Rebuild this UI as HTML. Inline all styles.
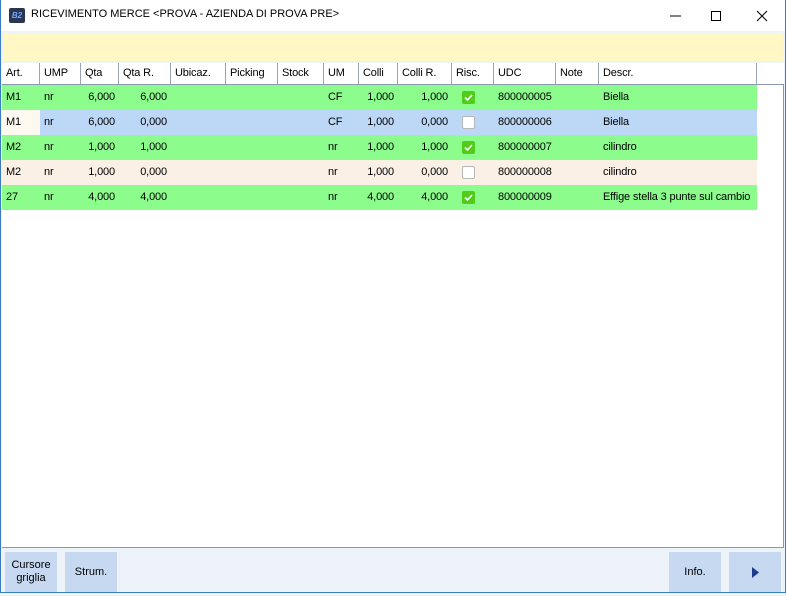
<!DOCTYPE html>
<html><head><meta charset="utf-8"><style>
*{margin:0;padding:0;box-sizing:border-box}
body{width:786px;height:593px;overflow:hidden;background:#eef2f9;font-family:Tahoma,"Liberation Sans",sans-serif;font-size:11px;color:#000;position:relative}
.win{position:absolute;left:0;top:0;width:786px;height:593px;border:1px solid #3a7cc2;border-top:none}
.title{position:absolute;left:0;top:0;width:785px;height:31px;background:#fff}
.logo{position:absolute;left:9px;top:8px;width:16px;height:15px;background:#2a3550;border-radius:2px;color:#6fa8ff;font-size:8px;font-style:italic;font-weight:bold;line-height:15px;text-align:center}
.ttl{position:absolute;left:31px;top:8px;font-size:11px}
.yellow{position:absolute;left:3px;top:33px;width:780px;height:28px;background:#fff8c4}
.grid{position:absolute;left:2px;top:63px;width:782px;height:485px;background:#fff;border-right:1px solid #8898b0;border-bottom:1px solid #8898b0;letter-spacing:-0.15px}
.row{position:absolute;left:0;height:25px;width:755px}
.c{position:absolute;top:0;height:100%;line-height:24px;padding-left:4px;white-space:nowrap}
.hdr{top:0;height:22px;width:782px;border-bottom:1px solid #8898b0;background:#fff}
.hdr .c{border-right:1px solid #9aa4b4;line-height:21px}
.r{text-align:right;padding-right:4px;padding-left:0}
.cb{position:absolute;top:6px;width:13px;height:13px;border-radius:2px}
.cb.on{background:#52cc1a}
.cb.off{background:#fff;border:1px solid #b8b8b8}
.btn{position:absolute;top:552px;height:41px;width:52px;background:#c6d9f0;text-align:center;font-size:11px}
</style></head><body>
<div class="title"><div class="logo">B2</div><div class="ttl">RICEVIMENTO MERCE &lt;PROVA - AZIENDA DI PROVA PRE&gt;</div>
<svg style="position:absolute;left:660px;top:9px" width="110" height="14"><line x1="10" y1="7" x2="21" y2="7" stroke="#000"/><rect x="51.5" y="2.5" width="9" height="9" fill="none" stroke="#000"/><path d="M97 2 L107 12 M107 2 L97 12" stroke="#000"/></svg></div>
<div class="yellow"></div>
<div class="grid">
<div class="row hdr">
<div class="c" style="left:0;width:38px">Art.</div><div class="c" style="left:38px;width:41px">UMP</div><div class="c" style="left:79px;width:38px">Qta</div><div class="c" style="left:117px;width:52px">Qta R.</div><div class="c" style="left:169px;width:55px">Ubicaz.</div><div class="c" style="left:224px;width:52px">Picking</div><div class="c" style="left:276px;width:46px">Stock</div><div class="c" style="left:322px;width:35px">UM</div><div class="c" style="left:357px;width:39px">Colli</div><div class="c" style="left:396px;width:54px">Colli R.</div><div class="c" style="left:450px;width:42px">Risc.</div><div class="c" style="left:492px;width:62px">UDC</div><div class="c" style="left:554px;width:43px">Note</div><div class="c" style="left:597px;width:158px">Descr.</div>
</div>
<div class="row" style="top:22px;background:#8cfc8c"><div class="c">M1</div><div class="c" style="left:38px">nr</div><div class="c r" style="left:79px;width:38px">6,000</div><div class="c r" style="left:117px;width:52px">6,000</div><div class="c" style="left:322px">CF</div><div class="c r" style="left:357px;width:39px">1,000</div><div class="c r" style="left:396px;width:54px">1,000</div><div class="cb on" style="left:460px"><svg width="13" height="13"><path d="M3 6.5 L5.5 9 L10 4" stroke="#fff" stroke-width="1.6" fill="none"/></svg></div><div class="c" style="left:492px">800000005</div><div class="c" style="left:597px">Biella</div></div>
<div class="row" style="top:47px;background:#bcd8f6"><div class="c" style="width:38px;background:#fdf8f0">M1</div><div class="c" style="left:38px">nr</div><div class="c r" style="left:79px;width:38px">6,000</div><div class="c r" style="left:117px;width:52px">0,000</div><div class="c" style="left:322px">CF</div><div class="c r" style="left:357px;width:39px">1,000</div><div class="c r" style="left:396px;width:54px">0,000</div><div class="cb off" style="left:460px"></div><div class="c" style="left:492px">800000006</div><div class="c" style="left:597px">Biella</div></div>
<div class="row" style="top:72px;background:#8cfc8c"><div class="c">M2</div><div class="c" style="left:38px">nr</div><div class="c r" style="left:79px;width:38px">1,000</div><div class="c r" style="left:117px;width:52px">1,000</div><div class="c" style="left:322px">nr</div><div class="c r" style="left:357px;width:39px">1,000</div><div class="c r" style="left:396px;width:54px">1,000</div><div class="cb on" style="left:460px"><svg width="13" height="13"><path d="M3 6.5 L5.5 9 L10 4" stroke="#fff" stroke-width="1.6" fill="none"/></svg></div><div class="c" style="left:492px">800000007</div><div class="c" style="left:597px">cilindro</div></div>
<div class="row" style="top:97px;background:#faf0e6"><div class="c">M2</div><div class="c" style="left:38px">nr</div><div class="c r" style="left:79px;width:38px">1,000</div><div class="c r" style="left:117px;width:52px">0,000</div><div class="c" style="left:322px">nr</div><div class="c r" style="left:357px;width:39px">1,000</div><div class="c r" style="left:396px;width:54px">0,000</div><div class="cb off" style="left:460px"></div><div class="c" style="left:492px">800000008</div><div class="c" style="left:597px">cilindro</div></div>
<div class="row" style="top:122px;background:#8cfc8c"><div class="c">27</div><div class="c" style="left:38px">nr</div><div class="c r" style="left:79px;width:38px">4,000</div><div class="c r" style="left:117px;width:52px">4,000</div><div class="c" style="left:322px">nr</div><div class="c r" style="left:357px;width:39px">4,000</div><div class="c r" style="left:396px;width:54px">4,000</div><div class="cb on" style="left:460px"><svg width="13" height="13"><path d="M3 6.5 L5.5 9 L10 4" stroke="#fff" stroke-width="1.6" fill="none"/></svg></div><div class="c" style="left:492px">800000009</div><div class="c" style="left:597px">Effige stella 3 punte sul cambio</div></div>
</div>
<div class="btn" style="left:5px;padding-top:7px;line-height:13px">Cursore<br>griglia</div>
<div class="btn" style="left:65px;line-height:40px">Strum.</div>
<div class="btn" style="left:669px;line-height:40px">Info.</div>
<div class="btn" style="left:729px"><svg width="52" height="41"><path d="M23 15 L30 20.5 L23 26 Z" fill="#1e3c8c"/></svg></div>
<div class="win"></div>
</body></html>
